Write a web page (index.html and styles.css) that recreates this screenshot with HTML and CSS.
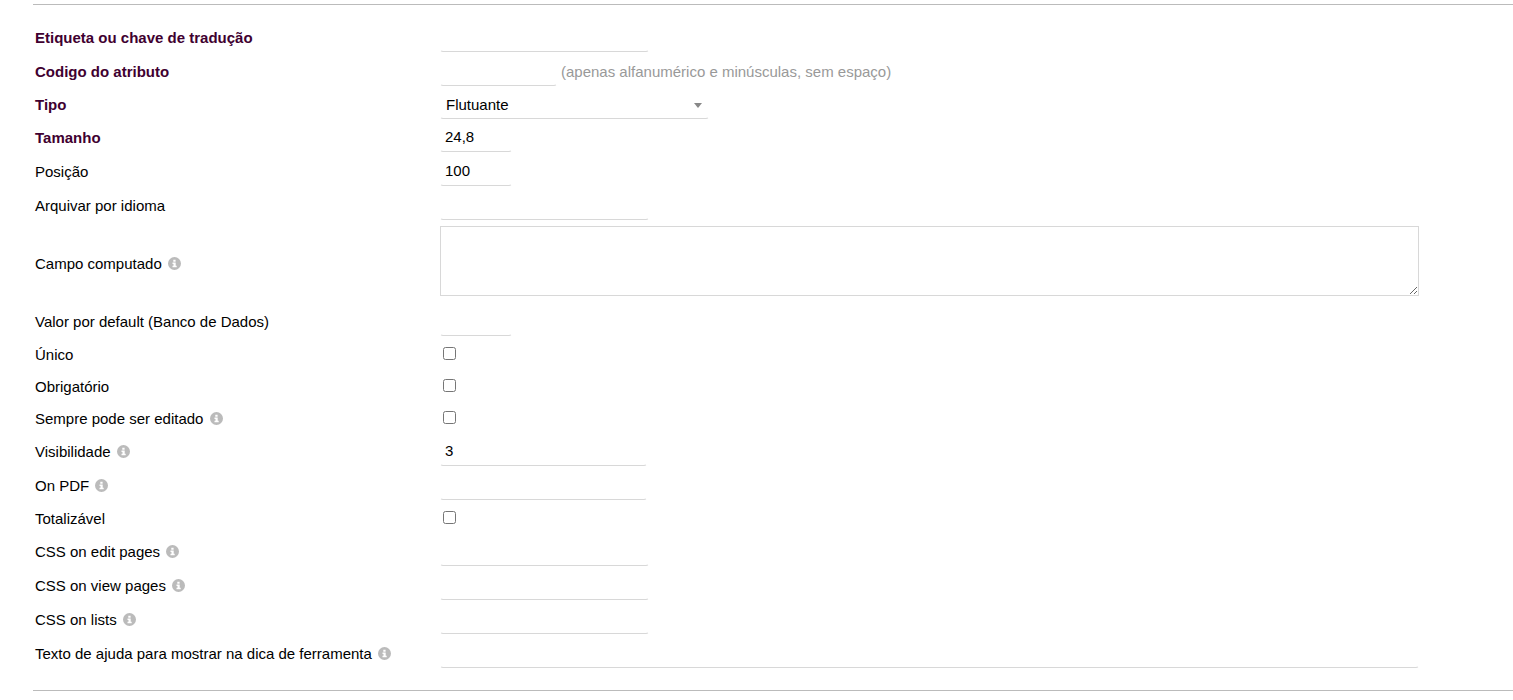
FILE: index.html
```html
<!DOCTYPE html>
<html lang="pt-BR">
<head>
    <meta charset="UTF-8">
    <meta name="viewport" content="width=device-width, initial-scale=1.0">
    <title>Novo atributo</title>
    <link rel="stylesheet" href="styles.css">
</head>
<body>
    <svg class="sprite" aria-hidden="true">
        <symbol id="info" viewBox="0 0 13 13">
            <path fill-rule="evenodd" d="M6.500 0a6.500 6.500 0 1 0 0 13a6.500 6.500 0 1 0 0-13zM5.300 2.700h2.300v2h-2.300zM4.500 5.500h3.200v3.200h1v1.500h-4.200v-1.500h1v-1.800h-1z"/>
        </symbol>
    </svg>

    <form class="attr-form">
        <div class="row">
            <label class="required" for="label">Etiqueta ou chave de tradução</label>
            <div class="field"><input type="text" id="label" class="input medium"></div>
        </div>
        <div class="row">
            <label class="required" for="attrname">Codigo do atributo</label>
            <div class="field">
                <input type="text" id="attrname" class="input code">
                <span class="hint">(apenas alfanumérico e minúsculas, sem espaço)</span>
            </div>
        </div>
        <div class="row row-select">
            <label class="required" for="type">Tipo</label>
            <div class="field">
                <div class="select-box">
                    <select id="type" class="input">
                        <option>Flutuante</option>
                    </select>
                </div>
            </div>
        </div>
        <div class="row">
            <label class="required" for="size">Tamanho</label>
            <div class="field"><input type="text" id="size" class="input small" value="24,8"></div>
        </div>
        <div class="row">
            <label for="pos">Posição</label>
            <div class="field"><input type="text" id="pos" class="input small" value="100"></div>
        </div>
        <div class="row">
            <label for="langfile">Arquivar por idioma</label>
            <div class="field"><input type="text" id="langfile" class="input medium"></div>
        </div>
        <div class="row row-area">
            <label for="computed">Campo computado <svg class="info"><use href="#info"/></svg></label>
            <div class="field"><textarea id="computed" class="area"></textarea></div>
        </div>
        <div class="row">
            <label for="default">Valor por default (Banco de Dados)</label>
            <div class="field"><input type="text" id="default" class="input small"></div>
        </div>
        <div class="row row-check">
            <label for="unique">Único</label>
            <div class="field"><input type="checkbox" id="unique" class="check"></div>
        </div>
        <div class="row row-check">
            <label for="required">Obrigatório</label>
            <div class="field"><input type="checkbox" id="required" class="check"></div>
        </div>
        <div class="row row-check">
            <label for="editable">Sempre pode ser editado <svg class="info"><use href="#info"/></svg></label>
            <div class="field"><input type="checkbox" id="editable" class="check"></div>
        </div>
        <div class="row">
            <label for="visibility">Visibilidade <svg class="info"><use href="#info"/></svg></label>
            <div class="field"><input type="text" id="visibility" class="input number" value="3"></div>
        </div>
        <div class="row">
            <label for="pdf">On PDF <svg class="info"><use href="#info"/></svg></label>
            <div class="field"><input type="text" id="pdf" class="input number"></div>
        </div>
        <div class="row row-check">
            <label for="total">Totalizável</label>
            <div class="field"><input type="checkbox" id="total" class="check"></div>
        </div>
        <div class="row">
            <label for="cssedit">CSS on edit pages <svg class="info"><use href="#info"/></svg></label>
            <div class="field"><input type="text" id="cssedit" class="input medium"></div>
        </div>
        <div class="row">
            <label for="cssview">CSS on view pages <svg class="info"><use href="#info"/></svg></label>
            <div class="field"><input type="text" id="cssview" class="input medium"></div>
        </div>
        <div class="row">
            <label for="csslist">CSS on lists <svg class="info"><use href="#info"/></svg></label>
            <div class="field"><input type="text" id="csslist" class="input medium"></div>
        </div>
        <div class="row">
            <label for="help">Texto de ajuda para mostrar na dica de ferramenta <svg class="info"><use href="#info"/></svg></label>
            <div class="field"><input type="text" id="help" class="input wide"></div>
        </div>
    </form>
</body>
</html>
```
FILE: styles.css
```css
* {
    box-sizing: border-box;
}

body {
    margin: 0;
    background: #fff;
    color: #000;
    font-family: "Liberation Sans", Arial, sans-serif;
    font-size: 15px;
    line-height: 18px;
}

.sprite {
    display: none;
}

.attr-form {
    margin: 4px 0 0 33px;
    padding: 15px 0 20px;
    border-top: 1px solid #bbb;
    border-bottom: 1px solid #bbb;
}

.row {
    display: grid;
    grid-template-columns: 405px 1fr;
    align-items: center;
    padding: 3px 0 2px 2px;
}

.row-select {
    padding-top: 2px;
    padding-bottom: 1px;
}

.row-area {
    padding-top: 2px;
    padding-bottom: 0;
}

.row-area .field {
    padding-top: 2px;
    padding-bottom: 8px;
}

.row-check {
    min-height: 32px;
}

.row-check .field {
    padding-bottom: 2px;
}

.required {
    color: #400030;
    font-weight: bold;
}

.info {
    width: 13px;
    height: 13px;
    margin-left: 2px;
    vertical-align: -1px;
    fill: #bbb;
}

.field {
    display: flex;
    align-items: center;
    padding-right: 94px;
}

/* Text fields: only the bottom line is visible */
.input {
    height: 29px;
    margin: 0;
    padding: 0 4px 2px;
    border: 1px solid transparent;
    border-bottom-color: #d8d8d8;
    border-radius: 3px;
    background: transparent;
    color: #000;
    font: inherit;
    outline: none;
}

.small {
    width: 72px;
}

.code {
    width: 117px;
}

.number {
    width: 207px;
}

.medium {
    width: 209px;
}

.wide {
    width: 100%;
}

.hint {
    margin-left: 4px;
    color: #999;
}

.select-box {
    position: relative;
    width: 269px;
}

.select-box select {
    display: block;
    width: 100%;
    padding: 0 5px;
    appearance: none;
}

.select-box::after {
    content: '';
    position: absolute;
    top: 13px;
    right: 7px;
    border: 4px solid transparent;
    border-top: 5px solid #888;
    border-bottom: 0;
    pointer-events: none;
}

.area {
    display: block;
    width: 100%;
    height: 70px;
    margin: 0;
    padding: 4px;
    border: 1px solid #d8d8d8;
    background: #fff;
    font: inherit;
    outline: none;
}

.check {
    width: 13px;
    height: 13px;
    margin: 0 3px;
}
```
